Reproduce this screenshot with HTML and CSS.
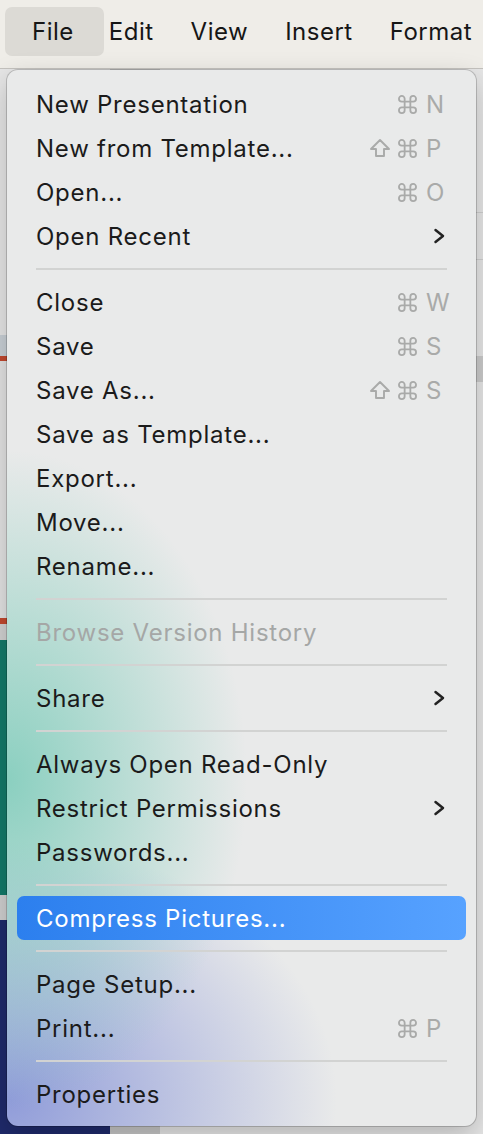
FILE: index.html
```html
<!DOCTYPE html>
<html lang="en">
<head>
    <meta charset="UTF-8">
    <title>File Menu</title>
    <link rel="stylesheet" href="styles.css">
</head>
<body>
    <!-- top menu bar -->
    <div class="menubar">
        <span class="menubar-item active">File</span>
        <span class="menubar-item">Edit</span>
        <span class="menubar-item">View</span>
        <span class="menubar-item">Insert</span>
        <span class="menubar-item">Format</span>
    </div>

    <!-- app window behind the menu -->
    <div class="desk">
        <div class="desk-left">
            <div class="band band-light"></div>
            <div class="band band-tab"></div>
            <div class="band band-red"></div>
            <div class="band band-pane"></div>
            <div class="band band-red2"></div>
            <div class="band band-grey"></div>
            <div class="band band-teal"></div>
            <div class="band band-grey2"></div>
            <div class="band band-navy"></div>
        </div>
        <div class="desk-mid"></div>
        <div class="desk-right">
            <div class="rline rline-1"></div>
            <div class="rline rline-2"></div>
            <div class="rbox"></div>
        </div>

        <!-- the dropdown -->
        <div class="menu">
            <div class="item"><span class="label">New Presentation</span><span class="keys"><svg class="cmd" width="19" height="19" viewBox="-1 -1 20 20"><path d="M6 6 L6 3 A3 3 0 1 0 3 6 L15 6 A3 3 0 1 0 12 3 L12 15 A3 3 0 1 0 15 12 L3 12 A3 3 0 1 0 6 15 Z"/></svg><span class="key">N</span></span></div>
            <div class="item"><span class="label">New from Template...</span><span class="keys"><svg class="shift" width="22" height="20" viewBox="0 0 22 20"><path d="M11 2 L20 11 L15 11 L15 18 L7 18 L7 11 L2 11 Z"/></svg><svg class="cmd" width="19" height="19" viewBox="-1 -1 20 20"><path d="M6 6 L6 3 A3 3 0 1 0 3 6 L15 6 A3 3 0 1 0 12 3 L12 15 A3 3 0 1 0 15 12 L3 12 A3 3 0 1 0 6 15 Z"/></svg><span class="key">P</span></span></div>
            <div class="item"><span class="label">Open...</span><span class="keys"><svg class="cmd" width="19" height="19" viewBox="-1 -1 20 20"><path d="M6 6 L6 3 A3 3 0 1 0 3 6 L15 6 A3 3 0 1 0 12 3 L12 15 A3 3 0 1 0 15 12 L3 12 A3 3 0 1 0 6 15 Z"/></svg><span class="key">O</span></span></div>
            <div class="item"><span class="label">Open Recent</span><svg class="chev" width="12" height="16" viewBox="0 0 12 16"><path d="M2.5 2 L10 8 L2.5 14"/></svg></div>
            <div class="sep"></div>
            <div class="item"><span class="label">Close</span><span class="keys"><svg class="cmd" width="19" height="19" viewBox="-1 -1 20 20"><path d="M6 6 L6 3 A3 3 0 1 0 3 6 L15 6 A3 3 0 1 0 12 3 L12 15 A3 3 0 1 0 15 12 L3 12 A3 3 0 1 0 6 15 Z"/></svg><span class="key">W</span></span></div>
            <div class="item"><span class="label">Save</span><span class="keys"><svg class="cmd" width="19" height="19" viewBox="-1 -1 20 20"><path d="M6 6 L6 3 A3 3 0 1 0 3 6 L15 6 A3 3 0 1 0 12 3 L12 15 A3 3 0 1 0 15 12 L3 12 A3 3 0 1 0 6 15 Z"/></svg><span class="key">S</span></span></div>
            <div class="item"><span class="label">Save As...</span><span class="keys"><svg class="shift" width="22" height="20" viewBox="0 0 22 20"><path d="M11 2 L20 11 L15 11 L15 18 L7 18 L7 11 L2 11 Z"/></svg><svg class="cmd" width="19" height="19" viewBox="-1 -1 20 20"><path d="M6 6 L6 3 A3 3 0 1 0 3 6 L15 6 A3 3 0 1 0 12 3 L12 15 A3 3 0 1 0 15 12 L3 12 A3 3 0 1 0 6 15 Z"/></svg><span class="key">S</span></span></div>
            <div class="item"><span class="label">Save as Template...</span></div>
            <div class="item"><span class="label">Export...</span></div>
            <div class="item"><span class="label">Move...</span></div>
            <div class="item"><span class="label">Rename...</span></div>
            <div class="sep"></div>
            <div class="item disabled"><span class="label">Browse Version History</span></div>
            <div class="sep"></div>
            <div class="item"><span class="label">Share</span><svg class="chev" width="12" height="16" viewBox="0 0 12 16"><path d="M2.5 2 L10 8 L2.5 14"/></svg></div>
            <div class="sep"></div>
            <div class="item"><span class="label">Always Open Read-Only</span></div>
            <div class="item"><span class="label">Restrict Permissions</span><svg class="chev" width="12" height="16" viewBox="0 0 12 16"><path d="M2.5 2 L10 8 L2.5 14"/></svg></div>
            <div class="item"><span class="label">Passwords...</span></div>
            <div class="sep"></div>
            <div class="item selected"><span class="label">Compress Pictures...</span></div>
            <div class="sep"></div>
            <div class="item"><span class="label">Page Setup...</span></div>
            <div class="item"><span class="label">Print...</span><span class="keys"><svg class="cmd" width="19" height="19" viewBox="-1 -1 20 20"><path d="M6 6 L6 3 A3 3 0 1 0 3 6 L15 6 A3 3 0 1 0 12 3 L12 15 A3 3 0 1 0 15 12 L3 12 A3 3 0 1 0 6 15 Z"/></svg><span class="key">P</span></span></div>
            <div class="sep"></div>
            <div class="item"><span class="label">Properties</span></div>
        </div>
    </div>
</body>
</html>
```

FILE: styles.css
```css
html, body {
    margin: 0;
    padding: 0;
    overflow: hidden;
}
body {
    width: 483px;
    height: 1134px;
    font-family: Inter, "Noto Sans", sans-serif;
    background-color: #e3e3e3;
}

/* ---- menu bar ---- */
.menubar {
    height: 61px;
    display: flex;
    align-items: flex-start;
    gap: 37px;
    padding: 7px 0 0 5px;
    background-color: #efede8;
    border-bottom: 1px solid #c4c2be;
    white-space: nowrap;
}
.menubar-item {
    font-size: 24px;
    letter-spacing: 0.5px;
    color: #161616;
    line-height: 49px;
}
.menubar-item.active {
    padding: 0 30px 0 27px;
    margin-right: -32px;
    background-color: #dcdad5;
    border-radius: 7px;
}

/* ---- window behind ---- */
.desk {
    position: relative;
    height: 1065px;
    display: grid;
    grid-template-columns: 110px 50px 1fr;
}
.desk-left {
    display: flex;
    flex-direction: column;
}
.band-light { height: 266px; background-color: #e6e6e6; }
.band-tab   { height: 21px;  background-color: #c9d0d6; }
.band-red   { height: 5px;   background-color: #c2492f; }
.band-pane  { height: 257px; background-color: #e3e3e3; }
.band-red2  { height: 6px;   background-color: #c2492f; }
.band-grey  { height: 16px;  background-color: #d2d2d2; }
.band-teal  { height: 255px; background-color: #137a69; }
.band-grey2 { height: 25px;  background-color: #d0d0d0; }
.band-navy  { flex: 1;       background-color: #1f2a6b; }

.desk-mid {
    background-color: #c6c6c6;
}
.desk-right {
    background-color: #e6e6e6;
    padding-top: 143px;
}
.rline {
    height: 1px;
    background-color: #cfcfcf;
    margin-bottom: 46px;
}
.rbox {
    height: 26px;
    margin-top: 96px;
    background-color: #cbcbcb;
}

/* ---- dropdown ---- */
.menu {
    position: absolute;
    left: 7px;
    top: 1px;
    width: 469px;
    padding: 12px 0 10px;
    border-radius: 11px;
    background-color: #e9eaea;
    background-image:
        radial-gradient(ellipse 240px 330px at 0 710px, rgba(112, 200, 180, 0.78), rgba(112, 200, 180, 0)),
        radial-gradient(ellipse 330px 260px at 0 1030px, rgba(128, 142, 214, 0.85), rgba(128, 142, 214, 0));
    box-shadow: 0 0 0 1px rgba(0, 0, 0, 0.18), 0 10px 28px rgba(0, 0, 0, 0.22);
}
.item {
    height: 44px;
    margin: 0 10px;
    padding: 0 21px 0 19px;
    display: flex;
    align-items: center;
    border-radius: 7px;
    font-size: 24px;
    letter-spacing: 0.75px;
    color: #1b1b1b;
    white-space: nowrap;
}
.item .label {
    flex: 1;
}
.item.disabled {
    color: #a5a7a6;
}
.item.selected {
    color: #fff;
    background: linear-gradient(90deg, #2c7fee, #57a2ff);
}
.keys {
    display: flex;
    align-items: center;
    color: #a9aaa9;
}
.keys svg path {
    fill: none;
    stroke: #a9aaa9;
    stroke-width: 1.9;
    stroke-linejoin: round;
}
.keys .shift {
    margin-right: 7px;
}
.keys .cmd {
    margin-right: 9px;
}
.keys .key {
    width: 19px;
}
.chev path {
    fill: none;
    stroke: #222;
    stroke-width: 2.5;
    stroke-linecap: round;
    stroke-linejoin: round;
}
.sep {
    height: 2px;
    margin: 10px 29px;
    background-color: #d2d3d2;
}
```
